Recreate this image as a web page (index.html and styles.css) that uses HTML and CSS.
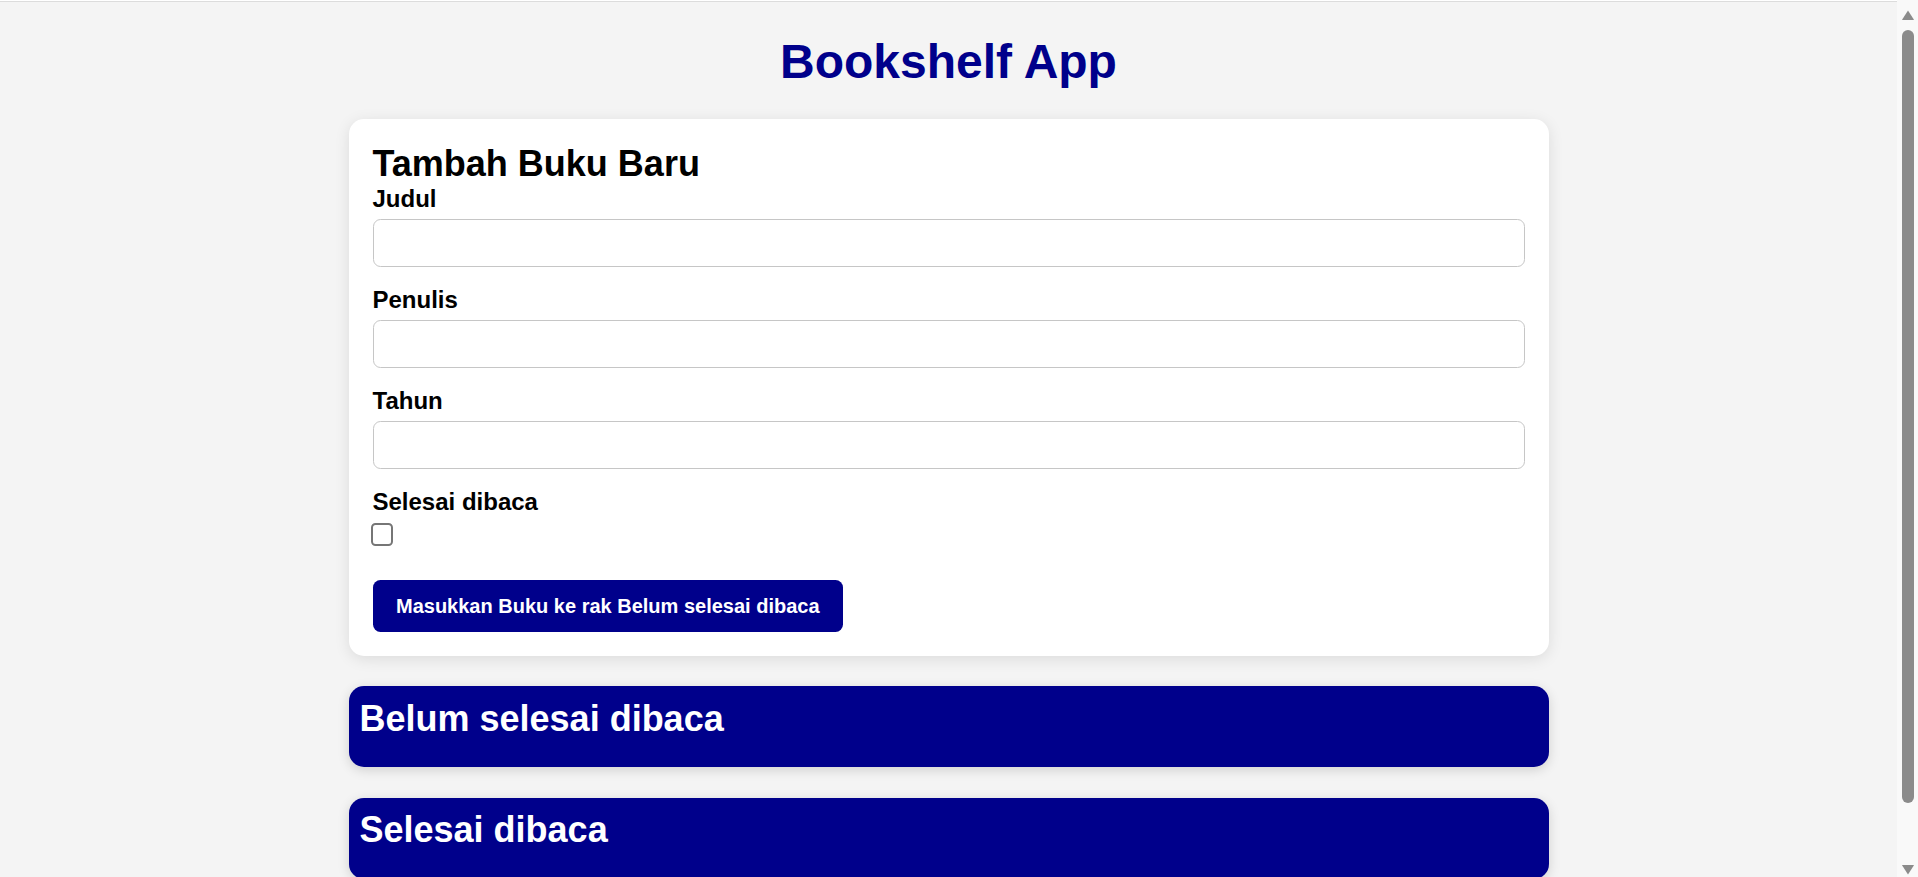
FILE: index.html
```html
<!DOCTYPE html>
<html lang="id">
<head>
<meta charset="utf-8">
<title>Bookshelf App</title>
<link rel="stylesheet" href="styles.css">
</head>
<body>
<div class="page">
  <header class="app-header">
    <h1 class="app-title">Bookshelf App</h1>
  </header>
  <main class="container">
    <section class="card form-card">
      <h2 class="card-title">Tambah Buku Baru</h2>
      <form class="book-form">
        <div class="form-group">
          <label class="form-label" for="title">Judul</label>
          <input class="form-input" id="title" type="text">
        </div>
        <div class="form-group">
          <label class="form-label" for="author">Penulis</label>
          <input class="form-input" id="author" type="text">
        </div>
        <div class="form-group">
          <label class="form-label" for="year">Tahun</label>
          <input class="form-input" id="year" type="number">
        </div>
        <div class="form-group">
          <label class="form-label" for="complete">Selesai dibaca</label>
          <input class="form-check" id="complete" type="checkbox">
        </div>
        <button class="submit-btn" type="button">Masukkan Buku ke rak <span>Belum selesai dibaca</span></button>
      </form>
    </section>
    <section class="shelf">
      <h2 class="shelf-title">Belum selesai dibaca</h2>
      <div class="book-list"></div>
    </section>
    <section class="shelf">
      <h2 class="shelf-title">Selesai dibaca</h2>
      <div class="book-list"></div>
    </section>
  </main>
</div>
<div class="scrollbar" aria-hidden="true">
  <svg class="scroll-arrow scroll-arrow-up" width="12" height="10" viewBox="0 0 12 10"><path d="M6 0.5 L11.8 9.5 Q12 10 11.4 10 L0.6 10 Q0 10 0.2 9.5 Z" fill="#8b8b8b"/></svg>
  <div class="scroll-thumb"></div>
  <svg class="scroll-arrow scroll-arrow-down" width="12" height="10" viewBox="0 0 12 10"><path d="M6 9.5 L11.8 0.5 Q12 0 11.4 0 L0.6 0 Q0 0 0.2 0.5 Z" fill="#8b8b8b"/></svg>
</div>
</body>
</html>
```
FILE: styles.css
```css
html {
  background: #f4f4f4;
  border-top: 1px solid #ffffff;
}

body {
  margin: 0;
  border-top: 1px solid #dcdcdc;
  background: #f4f4f4;
  font-family: "Liberation Sans", Arial, sans-serif;
  color: #000;
}

.page {
  margin-right: 21px;
}

.app-header {
  padding-top: 31.5px;
}

.app-title {
  margin: 0;
  font-size: 48px;
  line-height: 55px;
  font-weight: 700;
  color: #00008b;
  text-align: center;
}

.container {
  max-width: 1200px;
  margin: 30px auto 0;
  padding-bottom: 78px;
  display: flex;
  flex-direction: column;
  gap: 30.3px;
}

.card {
  background: #ffffff;
  border-radius: 15px;
  padding: 24px;
  box-shadow: 0 3px 15px rgba(0, 0, 0, 0.1);
}

.card-title {
  margin: 0;
  font-size: 36px;
  font-weight: 700;
  line-height: 42px;
}

.book-form {
  display: flex;
  flex-direction: column;
  align-items: flex-start;
}

.form-group {
  align-self: stretch;
  display: flex;
  flex-direction: column;
  align-items: flex-start;
  margin-bottom: 18.5px;
}

.form-label {
  display: block;
  font-size: 24px;
  font-weight: 700;
  line-height: 27px;
  margin-bottom: 7.5px;
}

.form-input {
  align-self: stretch;
  box-sizing: border-box;
  height: 48px;
  margin: 0;
  padding: 0 12px;
  border: 1px solid #c6c6c6;
  border-radius: 7.5px;
  background: #fff;
  font-family: inherit;
  font-size: 20px;
  outline: none;
}

.form-check {
  appearance: none;
  -webkit-appearance: none;
  box-sizing: border-box;
  width: 22px;
  height: 23px;
  margin: 1px 0 15px -1.5px;
  border: 2px solid #767676;
  border-radius: 4.5px;
  background: #fff;
}

.submit-btn {
  margin: 0;
  padding: 15px 23.5px;
  border: none;
  border-radius: 7.5px;
  background: #00008b;
  color: #fff;
  font-family: inherit;
  font-size: 20px;
  font-weight: 700;
  line-height: 22.5px;
  cursor: pointer;
}

.shelf {
  background: #00008b;
  color: #fff;
  border-radius: 15px;
  padding: 11.5px 11px 12.3px;
  box-shadow: 0 3px 12px rgba(0, 0, 0, 0.15);
}

.shelf-title {
  margin: 0 0 15.2px;
  font-size: 36px;
  font-weight: 700;
  line-height: 42px;
}

/* simulated page scrollbar (browser chrome, drawn over the page edge) */
.scrollbar {
  position: fixed;
  top: 0;
  right: 0;
  bottom: 0;
  width: 21px;
  background: #f9f9f9;
  display: flex;
  flex-direction: column;
  align-items: center;
  padding-left: 1px;
  box-sizing: border-box;
}

.scroll-arrow {
  display: block;
  flex: none;
}

.scroll-arrow-up {
  margin-top: 10px;
}

.scroll-thumb {
  flex: none;
  width: 12px;
  height: 773px;
  margin-top: 10px;
  border-radius: 6px;
  background: #8b8b8b;
}

.scroll-arrow-down {
  margin-top: auto;
  margin-bottom: 2px;
}
```
